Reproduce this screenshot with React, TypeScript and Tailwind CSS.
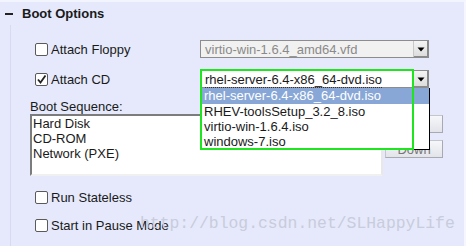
import React from 'react';

const Checkbox: React.FC<{ checked?: boolean }> = ({ checked = false }) => (
  <span className="relative flex h-[13px] w-[13px] shrink-0 items-center justify-center rounded-[2px] border border-[#5a5a5a] bg-white">
    {checked && (
      <svg width="11" height="11" viewBox="0 0 11 11" className="absolute">
        <path d="M2 5.5 L4.5 8.5 L9.5 1.5" fill="none" stroke="#222" strokeWidth="1.8" />
      </svg>
    )}
  </span>
);

const Arrow: React.FC = () => (
  <span className="flex h-full w-[15px] shrink-0 items-center justify-center border-l border-[#c8c8c8] bg-gradient-to-b from-[#f4f4f4] to-[#dcdcdc] shadow-[inset_-1px_-1px_0_#8a8a8a]">
    <svg width="8" height="5" viewBox="0 0 8 5">
      <path d="M0.5 0.5 H7.5 L4 4.5 Z" fill="#000" />
    </svg>
  </span>
);

const CheckRow: React.FC<{ label: string; checked?: boolean; children?: React.ReactNode }> = ({
  label,
  checked,
  children,
}) => (
  <div className="flex h-[18px] items-center">
    <div className="flex w-[165px] items-center gap-[3px]">
      <Checkbox checked={checked} />
      <span className="leading-none">{label}</span>
    </div>
    {children}
  </div>
);

const isoOptions = [
  'rhel-server-6.4-x86_64-dvd.iso',
  'RHEV-toolsSetup_3.2_8.iso',
  'virtio-win-1.6.4.iso',
  'windows-7.iso',
];

export default function App() {
  return (
    <div
      className="relative h-[246px] w-[466px] overflow-hidden border-t-2 border-r-2 border-t-[#f3f5fe] border-r-[#f5f6ff] bg-[#e5e9fb] text-[13px] text-[#1a1a1a]"
      style={{ fontFamily: '"Liberation Sans", Arial, sans-serif' }}
    >
      {/* header */}
      <div className="flex h-[23px] items-center gap-[9px] pl-[5px]">
        <span className="h-[2px] w-[8px] bg-[#222]" />
        <span className="font-bold leading-none">Boot Options</span>
      </div>

      <div className="ml-[10px] h-[221px] border-l border-[#d6dbf1] pl-[24px] pt-[15px]">
        <CheckRow label="Attach Floppy">
          <div className="flex h-[18px] w-[229px] items-center border border-[#8c8c8c] bg-[#f1f1f1]">
            <span className="flex-1 pl-[4px] leading-none text-[#8a8a8a]">virtio-win-1.6.4_amd64.vfd</span>
            <Arrow />
          </div>
        </CheckRow>

        <div className="mt-[12px]">
          <CheckRow label="Attach CD" checked>
            <div className="flex h-[18px] w-[229px] items-center border border-[#8c8c8c] bg-white">
              <span className="flex-1 pl-[4px] leading-none">
                <span className="border-b border-dotted border-[#333]">rhel-server-6.4-x86_64-dvd.iso</span>
              </span>
              <Arrow />
            </div>
          </CheckRow>
        </div>

        <div className="-ml-[5px] mt-[11px] leading-[15px]">Boot Sequence:</div>
        <div className="-ml-[5px] flex gap-[2px]">
          <div className="h-[62px] w-[353px] border-2 border-[#7c7c7c] border-r-[#e8e8e8] border-b-[#f0f0f0] bg-white pl-[1px] leading-[15px]">
            <div>Hard Disk</div>
            <div>CD-ROM</div>
            <div>Network (PXE)</div>
          </div>
          <div className="flex flex-col gap-[7px] pt-[1px]">
            <button className="h-[18px] w-[58px] border border-[#c4c6cc] border-b-[#a8aab0] border-r-[#a8aab0] bg-gradient-to-b from-[#f6f7fa] to-[#e2e4ea] leading-none text-[#777]">
              Up
            </button>
            <button className="h-[18px] w-[58px] border border-[#c4c6cc] border-b-[#a8aab0] border-r-[#a8aab0] bg-gradient-to-b from-[#f6f7fa] to-[#e2e4ea] leading-none text-[#777]">
              Down
            </button>
          </div>
        </div>

        <div className="mt-[12px]">
          <CheckRow label="Run Stateless" />
        </div>
        <div className="mt-[10px]">
          <CheckRow label="Start in Pause Mode" />
        </div>
      </div>

      {/* open dropdown list */}
      <div className="absolute left-[201px] top-[86px] h-[62px] w-[229px] border-r border-b border-black bg-white leading-[15px]">
        {isoOptions.map((opt, i) => (
          <div
            key={opt}
            className={`pl-[3px] ${i === 0 ? 'h-[16px] bg-[#88a7d6] leading-[16px] text-white' : 'h-[15px]'}`}
          >
            {opt}
          </div>
        ))}
      </div>

      {/* green highlight */}
      <div className="pointer-events-none absolute left-[200px] top-[67px] h-[81px] w-[214px] border-2 border-[#1ee61e]" />

      {/* watermark */}
      <div
        className="pointer-events-none absolute left-[140px] top-[214px] text-[16.4px] leading-none text-[#c9ccdc]"
        style={{ fontFamily: '"Liberation Mono", monospace' }}
      >
        http://blog.csdn.net/SLHappyLife
      </div>
    </div>
  );
}
